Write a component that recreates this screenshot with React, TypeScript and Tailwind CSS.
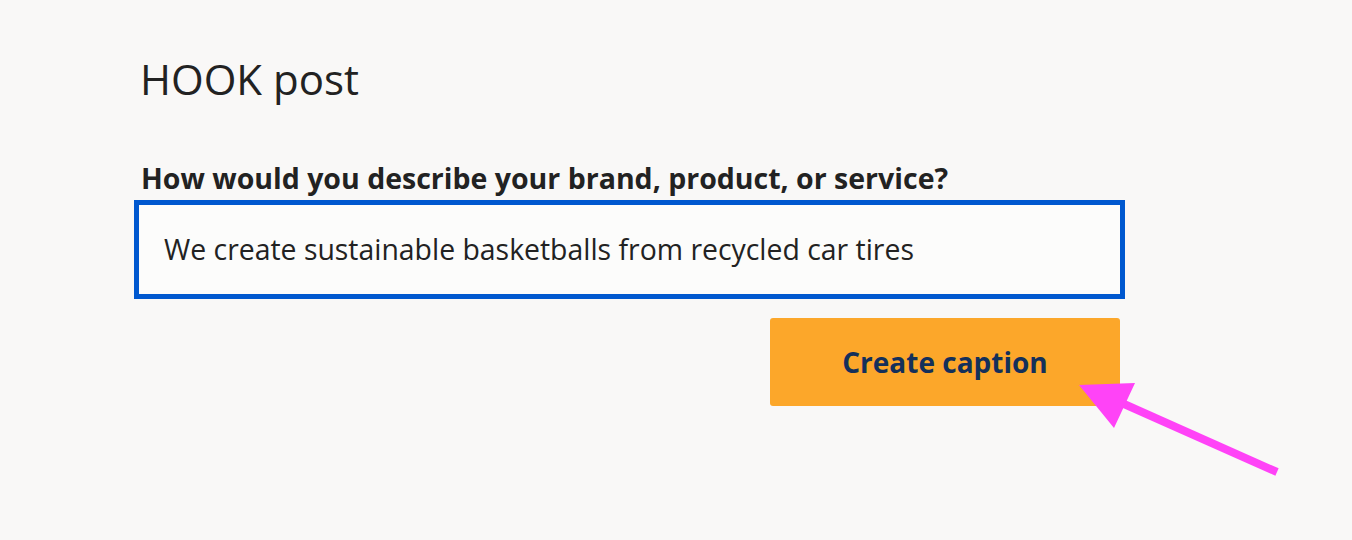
import React from "react";

export default function App() {
  return (
    <div
      className="relative w-[1352px] h-[540px] bg-[#f9f8f7] overflow-hidden"
      style={{ fontFamily: '"Open Sans", "Noto Sans", sans-serif' }}
    >
      <div className="pt-[51px] pl-[134px] w-[1125px]">
        <h1 className="pl-[6px] text-[42px] leading-[56px] text-[#222222] font-normal">HOOK post</h1>
        <label className="block mt-[53px] pl-[7px] text-[28.5px] leading-[36px] font-bold text-[#222222] whitespace-nowrap">
          How would you describe your brand, product, or service?
        </label>
        <div className="mt-[4px] h-[99px] border-[5px] border-[#0058cf] bg-[#fcfcfb] flex items-center pl-[25px] text-[28.4px] text-[#222222] whitespace-nowrap">
          We create sustainable basketballs from recycled car tires
        </div>
        <div className="flex justify-end mt-[19px] pr-[5px]">
          <button className="w-[350px] h-[88px] rounded-[3px] bg-[#fca72a] text-[#14305a] text-[28px] font-bold">
            Create caption
          </button>
        </div>
      </div>
      <svg className="absolute left-0 top-0 pointer-events-none" width="1352" height="540">
        <line x1="1124" y1="404" x2="1277" y2="472" stroke="#ff43f7" strokeWidth="8" />
        <polygon points="1079,385 1135,383 1114,428" fill="#ff43f7" />
      </svg>
    </div>
  );
}
